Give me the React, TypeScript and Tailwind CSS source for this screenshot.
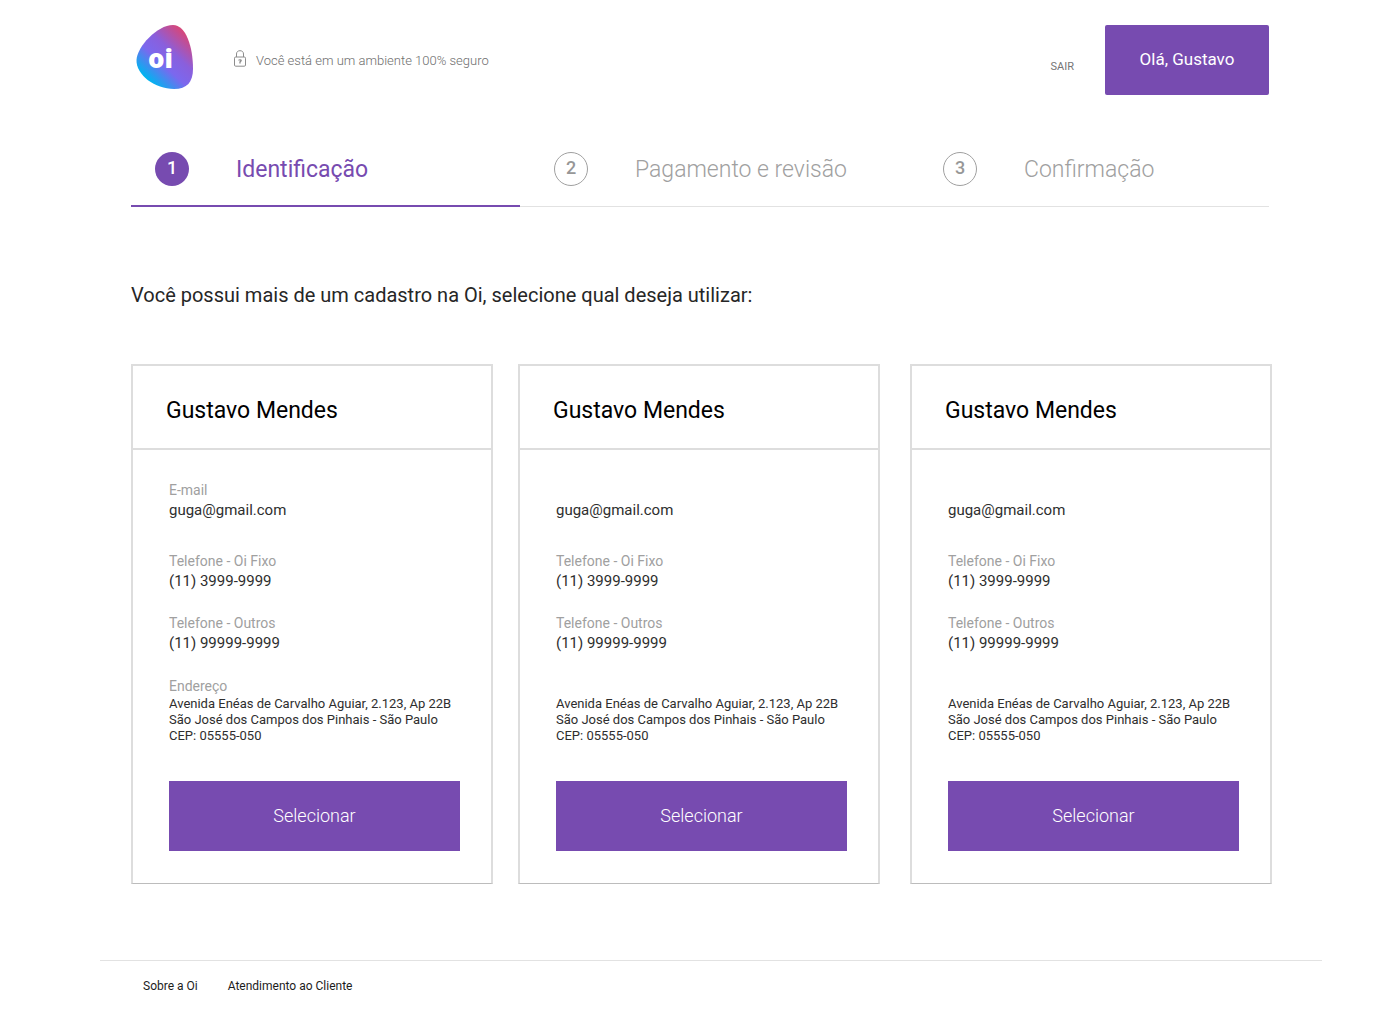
import React from "react";

type Registration = {
  name: string;
  email: string;
  landline: string;
  mobile: string;
  address: string[];
  showAllLabels: boolean;
};

const person = {
  name: "Gustavo Mendes",
  email: "guga@gmail.com",
  landline: "(11) 3999-9999",
  mobile: "(11) 99999-9999",
  address: [
    "Avenida Enéas de Carvalho Aguiar, 2.123, Ap 22B",
    "São José dos Campos dos Pinhais - São Paulo",
    "CEP: 05555-050",
  ],
};

const registrations: Registration[] = [
  { ...person, showAllLabels: true },
  { ...person, showAllLabels: false },
  { ...person, showAllLabels: false },
];

function Logo() {
  return (
    <svg width="58" height="66" viewBox="0 0 58 66" role="img">
      <defs>
        <linearGradient id="blob" gradientUnits="userSpaceOnUse" x1="9" y1="53" x2="51" y2="8">
          <stop offset="0" stopColor="#00b4f0" />
          <stop offset="0.35" stopColor="#7b68ee" />
          <stop offset="0.6" stopColor="#8a5fdc" />
          <stop offset="1" stopColor="#dc4572" />
        </linearGradient>
      </defs>
      <path
        d="M0.5 36C1 23 21 1 37 1C50 1 57 23 57 45C57 58 51 65 38 65C19 65 0 51 0.5 36Z"
        fill="url(#blob)"
      />
      <text x="12" y="44" fill="#fff" fontFamily="'Open Sans', sans-serif" fontWeight="800" fontSize="26">
        oi
      </text>
    </svg>
  );
}

function Lock() {
  return (
    <svg width="12" height="17" viewBox="0 0 12 17" fill="none" stroke="#8c8c8c" strokeWidth="1">
      <path d="M2.5 7V4C2.5 1.8 4 0.7 6 0.7S9.500 1.800 9.500 4V7" />
      <rect x="0.5" y="7" width="11" height="9.200" rx="1.200" />
      <path d="M4.800 10.500C4.800 9.600 7.200 9.600 7.200 10.500C7.200 11.400 6 11.300 6 12V13.500" strokeWidth="1.300" />
    </svg>
  );
}

function Step({ number, title, active }: { number: number; title: string; active?: boolean }) {
  return (
    <li
      className={
        active
          ? "-mb-px flex h-[55px] items-start border-b-2 border-[#774bb0] pl-6 text-[#774bb0]"
          : "flex h-[54px] items-start pl-[34px] text-[#a0a0a0]"
      }
      aria-current={active ? "step" : undefined}
    >
      <span
        className={
          active
            ? "flex size-[34px] shrink-0 items-center justify-center rounded-full bg-[#774bb0] pb-0.5 text-lg font-medium text-white"
            : "flex size-[34px] shrink-0 items-center justify-center rounded-full border border-[#a0a0a0] pb-0.5 text-lg font-medium text-[#979797]"
        }
      >
        {number}
      </span>
      <span
        className={
          active
            ? "ml-[47px] text-[23px] leading-9"
            : "ml-[47px] text-[23px] leading-9 font-light"
        }
      >
        {title}
      </span>
    </li>
  );
}

function Field({ label, value }: { label?: string; value: string }) {
  return (
    <div>
      <p className="h-5 text-sm leading-5 text-[#a0a0a0]">{label}</p>
      <p className="text-[15px] leading-5 text-[#2e2e2e]">{value}</p>
    </div>
  );
}

function Card({ item }: { item: Registration }) {
  return (
    <article className="border-2 border-b border-[#dddddd] border-b-[#bcbcbc]">
      <h2 className="border-b-2 border-[#dddddd] pt-[29px] pb-[21px] pl-[33px] text-[23px] leading-8 text-black">
        {item.name}
      </h2>
      <div className="pt-[30px] pr-[31px] pb-8 pl-9">
        <Field label={item.showAllLabels ? "E-mail" : undefined} value={item.email} />
        <div className="mt-[31px]">
          <Field label="Telefone - Oi Fixo" value={item.landline} />
        </div>
        <div className="mt-[22px]">
          <Field label="Telefone - Outros" value={item.mobile} />
        </div>
        <p className="mt-[23px] h-5 text-sm leading-5 text-[#a0a0a0]">
          {item.showAllLabels ? "Endereço" : null}
        </p>
        <address className="text-[13px] leading-4 text-[#2e2e2e] not-italic">
          {item.address.map((line) => (
            <span key={line} className="block">
              {line}
            </span>
          ))}
        </address>
        <button type="button" className="mt-[37px] h-[70px] w-full bg-[#774bb0] text-lg font-light text-white">
          Selecionar
        </button>
      </div>
    </article>
  );
}

export default function App() {
  return (
    <div className="bg-white font-['Roboto',sans-serif]">
      <header className="flex items-start pt-6 pr-[130px] pl-[136px]">
        <Logo />
        <p className="mt-[26px] ml-10 flex items-start gap-2.5 text-[13px] leading-[22px] font-light text-[#6e6e6e]">
          <Lock />
          Você está em um ambiente 100% seguro
        </p>
        <a href="#sair" className="mt-[33px] ml-auto text-[11px] leading-5 text-[#757575]">
          SAIR
        </a>
        <button
          type="button"
          className="mt-px ml-[31px] h-[70px] w-[164px] rounded-[2px] bg-[#774bb0] text-[17px] text-white"
        >
          Olá, Gustavo
        </button>
      </header>

      <main className="pr-[127px] pl-[131px]">
        <ol className="mt-[57px] mr-[3px] grid grid-cols-[389fr_389fr_360fr] border-b border-[#e2e2e2]">
          <Step number={1} title="Identificação" active />
          <Step number={2} title="Pagamento e revisão" />
          <Step number={3} title="Confirmação" />
        </ol>

        <h1 className="mt-[73px] text-xl leading-[30px] text-[#262626]">
          Você possui mais de um cadastro na Oi, selecione qual deseja utilizar:
        </h1>

        <div className="mt-[54px] grid grid-cols-[387fr_392fr_362fr]">
          <div className="pr-[25px]">
            <Card item={registrations[0]} />
          </div>
          <div className="pr-[30px]">
            <Card item={registrations[1]} />
          </div>
          <div>
            <Card item={registrations[2]} />
          </div>
        </div>
      </main>

      <footer className="mt-[76px] mr-[77px] ml-[100px] flex gap-[30px] border-t border-[#e2e2e2] pt-[15px] pb-6 pl-[43px] text-xs leading-5 text-[#1c1c1c]">
        <a href="#sobre">Sobre a Oi</a>
        <a href="#atendimento">Atendimento ao Cliente</a>
      </footer>
    </div>
  );
}
